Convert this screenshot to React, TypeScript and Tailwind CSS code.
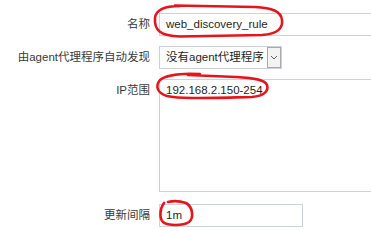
const font = { fontFamily: '"Liberation Sans", Arial, "Noto Sans CJK SC", sans-serif' };

function Label({ children, className = "" }: { children: React.ReactNode; className?: string }) {
  return (
    <div className={`w-[150px] shrink-0 text-right text-[11.5px] text-[#3a3a3a] whitespace-nowrap ${className}`}>
      {children}
    </div>
  );
}

export default function App() {
  return (
    <div className="relative w-[371px] h-[231px] overflow-hidden bg-white" style={font}>
      <div className="flex flex-col pt-[13px]">
        <div className="flex items-center gap-[9px]">
          <Label>名称</Label>
          <div className="h-[23px] w-[260px] shrink-0 border border-[#cdd3d8] flex items-center px-[6px] text-[11.5px] text-[#1f1f1f]">
            web_discovery_rule
          </div>
        </div>

        <div className="flex items-center gap-[9px] mt-[10px]">
          <Label>由agent代理程序自动发现</Label>
          <div className="h-[23px] w-[123px] shrink-0 flex border border-[#cdd3d8] bg-white">
            <div className="flex-1 min-w-0 overflow-hidden whitespace-nowrap flex items-center pl-[6px] text-[11.5px] text-[#1f1f1f]">
              没有agent代理程序
            </div>
            <div className="w-[14px] shrink-0 border border-[#a9a9a9] bg-[#f3f3f3] flex items-center justify-center">
              <svg width="8" height="5" viewBox="0 0 8 5">
                <path d="M1 1 L4 4 L7 1" fill="none" stroke="#606060" strokeWidth="1" />
              </svg>
            </div>
          </div>
        </div>

        <div className="flex gap-[9px] mt-[10px]">
          <Label className="pt-[3px]">IP范围</Label>
          <div className="h-[113px] w-[260px] shrink-0 border border-[#cdd3d8] px-[6px] pt-[2px] text-[11.5px] text-[#1f1f1f]">
            192.168.2.150-254
          </div>
        </div>

        <div className="flex items-center gap-[9px] mt-[12px]">
          <Label>更新间隔</Label>
          <div className="h-[23px] w-[144px] shrink-0 border border-[#cdd3d8] flex items-center px-[6px] text-[11.5px] text-[#1f1f1f]">
            1m
          </div>
        </div>
      </div>

      <svg className="absolute inset-0 pointer-events-none" width="371" height="231" viewBox="0 0 371 231">
        <g fill="none" stroke="#e8141b" strokeWidth="2.6" strokeLinecap="round" strokeLinejoin="round">
          <path d="M180 6 C 168 6, 156 8, 155 18 C 154 30, 160 36, 180 36.5 L 262 35 C 278 34, 283 28, 282 20 C 281 11, 272 8, 255 7 L 175 5.5" />
          <path d="M200 74 C 182 73, 166 75, 160 80 C 155 86, 157 93, 167 96 C 180 99, 205 98, 252 97 C 264 96, 269 91, 267 85 C 265 80, 256 78, 236 77 L 188 75" />
          <path d="M164 203 C 160 208, 159 218, 163 222 C 168 226, 183 226, 189 222 C 194 218, 193 207, 186 203 C 180 201, 172 201, 168 202" />
        </g>
      </svg>
    </div>
  );
}
